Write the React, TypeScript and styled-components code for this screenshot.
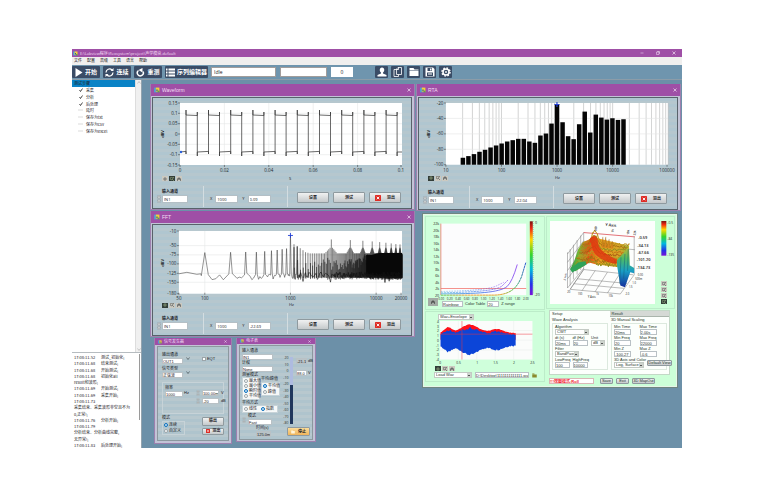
import React from "react";
import styled, { createGlobalStyle, css } from "styled-components";

const Global = createGlobalStyle`
  * { box-sizing: border-box; }
  html, body { margin: 0; background: #fff; }
  body { font: 5px/1 "Open Sans", "Noto Sans", "Noto Sans CJK SC", sans-serif; color: #1b2126; }
  button, input, select { font: inherit; color: inherit; margin: 0; padding: 0; border: 0; border-radius: 0; background: none; min-width: 0; }
  svg { display: block; flex-shrink: 0; }
  svg text { font-family: "Open Sans", "Noto Sans", "Noto Sans CJK SC", sans-serif; }
`;

/* ---------- application shell ---------- */

const Page = styled.main`
  min-height: 100vh;
  padding: 49px 75px 51px 72px;
  display: flex;
`;
const Shell = styled.div`
  flex: 1;
  min-width: 0;
  display: flex;
  flex-direction: column;
  background: #6c90a8;
`;
const TitleBar = styled.header`
  height: 8px;
  display: flex;
  align-items: center;
  gap: 2px;
  padding: 0 6px 0 1px;
  color: #f3dff5;
  background: #9f4fa6;
  white-space: nowrap;
`;
const Caption = styled.h1`
  flex: 1;
  margin: 0;
  font: 400 4px/7px "Open Sans", "Noto Sans CJK SC", sans-serif;
`;
const WinButtons = styled.div`
  display: flex;
  gap: 11px;
`;
const WinButton = styled.button`
  width: 5px;
  height: 6px;
  color: #f7e9f8;
  display: grid;
  place-items: center;
`;
const MenuBar = styled.nav`
  height: 8px;
  display: flex;
  align-items: center;
  gap: 5px;
  padding-left: 2px;
  background: #f0efee;
  color: #111;
  font-size: 4px;
`;
const ToolBar = styled.div`
  height: 15px;
  display: flex;
  align-items: center;
  border-bottom: 1px solid #8c9ca8;
  background: #6f95ae;
`;
const ToolButton = styled.button<{ $w: number }>`
  width: ${(p) => p.$w}px;
  height: 12px;
  margin-right: 3px;
  display: flex;
  align-items: center;
  justify-content: center;
  gap: 2px;
  border-radius: 1px;
  background: #3a4c66;
  color: #fff;
  font-size: 6px;
  font-weight: 700;
  white-space: nowrap;
`;
const StatusField = styled.input<{ $w: number; $center?: boolean; $gap?: number }>`
  width: ${(p) => p.$w}px;
  height: 10px;
  margin-right: ${(p) => p.$gap ?? 4}px;
  padding: 0 2px;
  background: #fff;
  border: 1px solid ${(p) => (p.$center ? "#fff" : "#a29d9b")};
  text-align: ${(p) => (p.$center ? "center" : "left")};
`;
const IconButton = styled.button`
  width: 13px;
  height: 12px;
  margin-right: 3px;
  border-radius: 1px;
  display: grid;
  place-items: center;
  background: #3a4c66;
  color: #fff;
`;
const Work = styled.div`
  flex: 1;
  display: flex;
  min-height: 0;
`;
const Side = styled.aside`
  width: 70px;
  display: flex;
  flex-direction: column;
  gap: 1px;
  background: #b6bcc0;
  border-right: 1px solid #93a3ae;
  font: 4px/1 "Noto Sans CJK SC", sans-serif;
`;
const SidePane = styled.div<{ $grow?: boolean }>`
  display: flex;
  background: #fff;
  ${(p) => (p.$grow ? css`flex: 1;` : css`height: 95px;`)}
`;
const Tree = styled.ul`
  flex: 1;
  height: 54px;
  margin: 0;
  padding: 0;
  list-style: none;
  display: grid;
  grid-auto-rows: 1fr;
`;
const TreeItem = styled.li<{ $active?: boolean }>`
  display: flex;
  align-items: center;
  white-space: nowrap;
  gap: 2px;
  padding-left: ${(p) => (p.$active ? 2 : 6)}px;
  background: ${(p) => (p.$active ? "#0a83c6" : "#fff")};
`;
const TreeMark = styled.span`
  width: 6px;
  height: 5px;
  display: grid;
  place-items: center;
`;
const ScrollBar = styled.div<{ $slim?: boolean }>`
  width: ${(p) => (p.$slim ? 3 : 6)}px;
  display: flex;
  flex-direction: column;
  justify-content: space-between;
  align-items: center;
  padding: 1px 0;
  background: ${(p) => (p.$slim ? "#fff" : "#f0f0f0")};
  border-left: ${(p) => (p.$slim ? 0 : 1)}px solid #ddd;
  color: #999;
`;
const Thumb = styled.span`
  width: 1px;
  height: 66px;
  background: #9a9a9a;
`;
const Log = styled.ol`
  flex: 1;
  margin: 0;
  padding: 1px 0 0 2px;
  list-style: none;
  display: grid;
  grid-auto-rows: 1fr;
  align-items: center;
  overflow: hidden;
`;
const LogLine = styled.li`
  display: flex;
  gap: 6px;
  white-space: nowrap;
`;
const Desktop = styled.section`
  position: relative;
  flex: 1;
  overflow: hidden;
  background: #6c90a8;
`;

/* ---------- child windows ---------- */

const Win = styled.section<{ $x: number; $y: number; $w: number; $h: number }>`
  position: absolute;
  left: ${(p) => p.$x}px;
  top: ${(p) => p.$y}px;
  width: ${(p) => p.$w}px;
  height: ${(p) => p.$h}px;
  display: flex;
  flex-direction: column;
  background: #c2c3d6;
  border: 1px solid #9d80ae;
  border-top: 0;
`;
const WinTitle = styled.header<{ $small?: boolean }>`
  height: ${(p) => (p.$small ? 7 : 12)}px;
  padding: 0 3px;
  display: flex;
  align-items: center;
  gap: 2px;
  background: #9f4fa6;
  color: #f3dff5;
  font-family: "Liberation Sans", "Noto Sans CJK SC", sans-serif;
  font-size: ${(p) => (p.$small ? 4 : 5)}px;
`;
const WinName = styled.h2`
  flex: 1;
  margin: 0;
  font: inherit;
`;
const WinBody = styled.div`
  flex: 1;
  margin: 1px 2px 0 1px;
  display: flex;
  flex-direction: column;
  border: 1px solid #58626a;
  background: repeating-linear-gradient(#b0c6d0 0 3px, #b6c7ce 3px 6px);
`;
const AxisRow = styled.div`
  height: 9px;
  display: flex;
  align-items: center;
  padding: 0 0 0 9px;
`;
const Tools = styled.div`
  display: flex;
  gap: 1px;
`;
const MiniTool = styled.button<{ $dark?: boolean }>`
  width: 6px;
  height: 5px;
  display: grid;
  place-items: center;
  background: ${(p) => (p.$dark ? "#333d38" : "#cbc9c0")};
  color: ${(p) => (p.$dark ? "#b7cf9a" : "#30363a")};
`;
const Unit = styled.span`
  flex: 1;
  padding-left: 107px;
  font-size: 4px;
`;
const Controls = styled.div`
  flex: 1;
  display: flex;
  align-items: flex-end;
  padding: 0 10px 5px 4px;
`;
const Channel = styled.label`
  width: 32px;
  display: grid;
  grid-template-columns: 4px 26px;
  column-gap: 1px;
  row-gap: 1px;
  & > :first-child { grid-column: 2; font-size: 4px; line-height: 5px; font-weight: 600; }
`;
const Field = styled.input<{ $w: number }>`
  width: ${(p) => p.$w}px;
  height: 8px;
  padding: 0 1px;
  background: #fff;
  border: 1px solid #b4bfc5;
  font-size: 4px;
`;
const Divider = styled.span<{ $l: number; $r: number }>`
  align-self: stretch;
  width: 1px;
  margin: 3px ${(p) => p.$r}px -4px ${(p) => p.$l}px;
  background: #d3dde1;
`;
const Reading = styled.label`
  display: flex;
  align-items: center;
  gap: 3px;
  margin-right: 4px;
  font-size: 4px;
`;
const Push = styled.button<{ $w?: number; $h?: number; $tone?: string; $gap?: number }>`
  width: ${(p) => p.$w ?? 32}px;
  height: ${(p) => p.$h ?? 11}px;
  display: flex;
  align-items: center;
  justify-content: center;
  gap: ${(p) => p.$gap ?? 6}px;
  border: 1px solid #8f9a9f;
  border-radius: 1px;
  background: ${(p) => p.$tone ?? "linear-gradient(#f0f1f1, #c5c9cb)"};
  font-size: 4px;
  font-weight: 600;
  white-space: nowrap;
`;
const Actions = styled.div`
  flex: 1;
  display: flex;
  justify-content: flex-end;
  gap: 4px;
`;

/* ---------- icons ---------- */

const LabIcon = ({ s = 6 }: { s?: number }) => (
  <svg width={s} height={s} viewBox="0 0 10 10">
    <path d="M0 1h6v8H0z" fill="#4f9ad6" />
    <path d="M3 1h6v7H3z" fill="#f5cf3a" />
    <path d="M4 4h2v3H4z" fill="#2b5b9a" />
    <path d="M6 6h3v3H6z" fill="#5fa34e" />
  </svg>
);
const Cross = ({ s = 4 }: { s?: number }) => (
  <svg width={s} height={s} viewBox="0 0 8 8">
    <path d="M1 1l6 6M7 1L1 7" stroke="currentColor" strokeWidth="1.3" />
  </svg>
);
const RedStop = ({ s = 6 }: { s?: number }) => (
  <svg width={s} height={s} viewBox="0 0 12 12">
    <rect width="12" height="12" rx="1" fill="#de2d26" />
    <path d="M3.500 3.500l5 5M8.500 3.500l-5 5" stroke="#fff" strokeWidth="1.800" />
  </svg>
);
const Spinner = ({ h = 8 }: { h?: number }) => (
  <svg width="4" height={h} viewBox="0 0 8 16">
    <rect x=".5" y=".5" width="7" height="7" rx="3" fill="#d5dbde" stroke="#87939a" />
    <rect x=".5" y="8.500" width="7" height="7" rx="3" fill="#d5dbde" stroke="#87939a" />
    <path d="M2 5l2-2 2 2M2 11l2 2 2-2" fill="none" stroke="#555" />
  </svg>
);
const PlayIcon = () => (
  <svg width="8" height="9" viewBox="0 0 16 18"><path d="M1 0l14 9-14 9z" fill="#fff" /></svg>
);
const CycleIcon = () => (
  <svg width="9" height="9" viewBox="0 0 18 18" fill="none" stroke="#fff" strokeWidth="2.400">
    <path d="M2 9a7 7 0 0 1 12-5M16 9a7 7 0 0 1-12 5" />
    <path d="M11 6h6V0zM7 12H1v6z" fill="#fff" stroke="none" />
  </svg>
);
const RedoIcon = () => (
  <svg width="9" height="9" viewBox="0 0 18 18" fill="none" stroke="#fff" strokeWidth="3">
    <path d="M5 5a6 6 0 1 0 9 2" />
    <path d="M5 4l8-4v9z" fill="#fff" stroke="none" />
  </svg>
);
const ListIcon = () => (
  <svg width="9" height="9" viewBox="0 0 18 18" fill="#fff">
    <path d="M0 1h3v4H0zM0 7h3v4H0zM0 13h3v4H0zM5 1h13v4H5zM5 7h13v4H5zM5 13h13v4H5z" />
  </svg>
);
const UserIcon = () => (
  <svg width="10" height="10" viewBox="0 0 20 20" fill="#fff">
    <path d="M10 1c3 0 4.500 2 4.500 5 0 2-1 4-2.500 5v2l7 3v3H1v-3l7-3v-2C6.500 10 5.500 8 5.500 6c0-3 1.500-5 4.500-5z" />
  </svg>
);
const CopyIcon = () => (
  <svg width="10" height="10" viewBox="0 0 20 20" fill="#3a4c66" stroke="#fff" strokeWidth="1.600">
    <path d="M2 5h9v14H2z" />
    <path d="M7 4l3-3h7v14H7zM7 5h4V1" />
  </svg>
);
const FolderIcon = ({ fill = "#fff", s = 10 }: { fill?: string; s?: number }) => (
  <svg width={s} height={s} viewBox="0 0 20 20" fill={fill}>
    <path d="M1 2h8l2 3h8v2H1zM1 8h18v10H1z" />
  </svg>
);
const SaveIcon = () => (
  <svg width="10" height="10" viewBox="0 0 20 20">
    <path d="M1 1h15l3 3v15H1z" fill="#fff" />
    <path d="M5 2h9v6H5zM4 11h12v7H4z" fill="#3a4c66" />
    <path d="M10 3h3v4h-3zM6 13h8v1H6zM6 15h8v1H6z" fill="#fff" />
  </svg>
);
const GearIcon = () => (
  <svg width="10" height="10" viewBox="0 0 20 20" fill="none" stroke="#fff">
    <circle cx="10" cy="10" r="6" strokeWidth="3" />
    <circle cx="10" cy="10" r="8" strokeWidth="3" strokeDasharray="3.140 3.140" />
    <circle cx="10" cy="10" r="1.500" fill="#fff" />
  </svg>
);
const Tick = () => (
  <svg width="4" height="4" viewBox="0 0 8 8"><path d="M1 4l2 3 4-6" fill="none" stroke="#111" strokeWidth="1.500" /></svg>
);
const Dash = () => (
  <svg width="6" height="4" viewBox="0 0 6 4"><path d="M0 2h5" stroke="#ccc" strokeWidth=".7" /></svg>
);
const Chevron = ({ up = false }: { up?: boolean }) => (
  <svg width="4" height="3" viewBox="0 0 8 6"><path d={up ? "M1 5l3-4 3 4" : "M1 1l3 4 3-4"} fill="none" stroke="currentColor" /></svg>
);
const CrossMark = () => (
  <svg width="4" height="4" viewBox="0 0 8 8"><path d="M4 0v8M0 4h8" stroke="currentColor" /></svg>
);
const ZoomMark = () => (
  <svg width="4" height="4" viewBox="0 0 8 8" fill="none" stroke="currentColor"><circle cx="3" cy="3" r="2.500" /><path d="M5 5l3 3M6 1h2" /></svg>
);
const HandMark = () => (
  <svg width="4" height="4" viewBox="0 0 8 8" fill="none" stroke="currentColor"><path d="M1 8V3M3 5V1M5 5V1M7 8V3M1 4h6" /></svg>
);

const GraphTools = ({ lit = 0 }: { lit?: number }) => (
  <Tools>
    <MiniTool aria-label="Cursor" $dark={lit === 0}><CrossMark /></MiniTool>
    <MiniTool aria-label="Zoom" $dark={lit === 1}><ZoomMark /></MiniTool>
    <MiniTool aria-label="Pan"><HandMark /></MiniTool>
  </Tools>
);

/* ---------- plots ---------- */

type TickMark = [number, string];

const YAxis = ({ x, ticks }: { x: number; ticks: TickMark[] }) => (
  <g fontSize="4.500" textAnchor="end" fill="#20282d">
    {ticks.map(([y, t]) => (
      <g key={t}>
        <path d={`M${x - 2} ${y}h2`} stroke="#444" strokeWidth=".6" />
        <text x={x - 2.5} y={y + 1.6}>{t}</text>
      </g>
    ))}
  </g>
);
const XAxis = ({ y, ticks }: { y: number; ticks: TickMark[] }) => (
  <g fontSize="4.500" textAnchor="middle" fill="#20282d">
    {ticks.map(([x, t]) => (
      <g key={t}>
        <path d={`M${x} ${y}v2`} stroke="#444" strokeWidth=".6" />
        <text x={x} y={y + 7}>{t}</text>
      </g>
    ))}
  </g>
);
const YName = ({ x, y }: { x: number; y: number }) => (
  <text fontSize="4" fontWeight="600" transform={`translate(${x} ${y}) rotate(-90)`} textAnchor="middle">dBV</text>
);

const noise = (i: number) => {
  const v = Math.sin(i * 12.9898) * 43758.5453;
  return v - Math.floor(v);
};

const WavePlot = () => {
  let d = "M27 54L33 53.400";
  for (let k = 0; k < 10; k++) {
    const r = 33.3 + k * 22.2;
    d += `V56V12V17L${r + 11} 17.500V14V58V54`;
    d += k < 9 ? `L${r + 22.2} 53.400` : "H249";
  }
  return (
    <svg viewBox="0 0 258 76" width="100%">
      <rect x="27" y="5" width="222" height="62" fill="#fff" />
      <path d="M71.400 5v62M115.800 5v62M160.200 5v62M204.600 5v62M27 15.300h222M27 25.700h222M27 36h222M27 46.300h222M27 56.700h222" stroke="#e4e6e6" strokeWidth=".6" />
      <path d={d} fill="none" stroke="#383838" strokeWidth=".75" />
      <circle cx="28" cy="54" r="1.200" fill="#2b60db" />
      <YAxis x={27} ticks={[[5, "0.15"], [15.3, "0.1"], [25.7, "0.05"], [36, "0"], [46.3, "-0.05"], [56.7, "-0.1"], [67, "-0.15"]]} />
      <XAxis y={67} ticks={[[27, "0"], [71.4, "0.02"], [115.8, "0.04"], [160.2, "0.06"], [204.6, "0.08"], [248, "0.1"]]} />
      <YName x={11} y={36} />
    </svg>
  );
};

const BAND_LEVELS = [233, 228, 222, 215, 209, 202, 196, 190, 184, 180, 176, 176, 184, 188, 166, 160, 130, 72, 126, 168, 177, 132, 94, 157, 103, 112, 118, 114, 119, 117];

const BandPlot = () => {
  let minor = "";
  for (let dec = 0; dec < 4; dec++)
    for (let m = 2; m <= 10; m++) minor += `M${27 + 55.8 * (dec + Math.log10(m))} 5v62`;
  return (
    <svg viewBox="0 0 259 76" width="100%">
      <rect x="27" y="5" width="223" height="62" fill="#fff" />
      <path d={minor} stroke="#bfc1c1" strokeWidth=".7" />
      <path d="M27 20.500h223M27 36h223M27 51.500h223" stroke="#e4e6e6" strokeWidth=".6" />
      {BAND_LEVELS.map((v, i) => {
        const top = (v - 68) / 3 + 5;
        return <rect key={i} x={41.8 + i * 5.56} y={top} width="4.500" height={67 - top} fill="#050505" />;
      })}
      <path d="M138.500 4v5M136 6.500h5" stroke="#2340d8" strokeWidth="1.100" />
      <YAxis x={27} ticks={[[5, "-20"], [20.5, "-40"], [36, "-60"], [51.5, "-80"], [67, "-100"]]} />
      <XAxis y={67} ticks={[[27, "10"], [82.8, "100"], [138.6, "1000"], [194.4, "10000"], [249, "100000"]]} />
      <YName x={11} y={36} />
    </svg>
  );
};

const fx = (hz: number) => 52 + 86 * Math.log10(hz / 100);
const SpectrumPlot = () => {
  let low = "M26 49L34 47.500L44 49.500L48 49";
  for (let n = 1; n <= 12; n++) {
    const x = fx(n * 100);
    const peak = n === 10 ? 10 : n < 4 ? 28 - n * 0.3 : 30 - n * 0.7;
    const half = Math.max(0.8, 3.5 / n);
    low += `L${x - half} ${49 + noise(n) * 2}L${x} ${peak}L${x + half} ${48 + noise(n + 40) * 2}`;
    const gap = fx((n + 1) * 100) - x - half * 2;
    for (let j = 1; j < 5; j++) low += `L${x + half + (gap * j) / 5} ${49 + noise(n * 9 + j) * 6}`;
  }
  let peaks = "";
  let dense = "";
  for (let n = 11; n <= 200; n++) {
    const x = fx(n * 100);
    const dist = (n + 10) % 20;
    const d = Math.min(dist, 20 - dist);
    const top = 28.5 - (d === 0 ? 15 - Math.min(6, n / 30) : Math.max(0, 7 - d * 1.4)) - (n < 17 ? (17 - n) * 0.6 : 0);
    peaks += `M${x} ${top}V53`;
    dense += `M${x + 0.3} ${n < 70 ? 33 + noise(n) * 12 : 29 + noise(n) * (n < 100 ? 10 : 1)}V${52 + noise(n + 3) * 3}`;
  }
  let floor = "M147 50";
  for (let x = 147; x < 250; x += x < 180 ? 1.2 : 0.5) floor += `L${x} ${47 + noise(x * 3) * 6 + (noise(x * 7) > 0.93 ? 5 : 0)}`;
  return (
    <svg viewBox="0 0 259 76" width="100%">
      <rect x="26" y="6" width="224" height="63" fill="#fff" />
      <path d="M52 6v63M138 6v63M224 6v63M26 20.700h224M26 30h224M26 39h224M26 48.500h224M26 57.500h224" stroke="#e4e6e6" strokeWidth=".6" />
      <path d={low} fill="none" stroke="#4c4c4c" strokeWidth=".6" />
      <path d={peaks} stroke="#333" strokeWidth=".6" />
      <path d={dense} stroke="#111" strokeWidth=".6" />
      <path d="M214 30h5l8-2h23v23h-26l-10-2z" fill="#080808" />
      <path d={floor} fill="none" stroke="#111" strokeWidth=".6" />
      <path d="M138 8v5M135.500 10.500h5" stroke="#2340d8" strokeWidth=".9" />
      <YAxis x={26} ticks={[[6, "-10"], [20.7, "-50"], [30, "-75"], [39, "-100"], [48.5, "-125"], [57.5, "-150"], [69, "-180"]]} />
      <XAxis y={68} ticks={[[26, "50"], [52, "100"], [138, "1000"], [224, "10000"], [249, "20000"]]} />
      <YName x={11} y={38} />
    </svg>
  );
};

interface GraphProps { name: string; x: number; y: number; h: number; unit: string; value: string; lit?: number; children: React.ReactNode }
const GraphWindow = ({ name, x, y, h, unit, value, lit, children }: GraphProps) => (
  <Win $x={x} $y={y} $w={265} $h={h}>
    <WinTitle>
      <LabIcon />
      <WinName>{name}</WinName>
      <WinButton aria-label={`Close ${name}`}><Cross /></WinButton>
    </WinTitle>
    <WinBody>
      {children}
      <AxisRow><GraphTools lit={lit} /><Unit>{unit}</Unit></AxisRow>
      <Controls>
        <Channel><span>输入通道</span><Spinner /><Field $w={26} defaultValue="IN1" /></Channel>
        <Divider $l={14} $r={6} />
        <Reading>X<Field $w={23} defaultValue="1000" /></Reading>
        <Reading>Y<Field $w={23} defaultValue={value} /></Reading>
        <Divider $l={12} $r={0} />
        <Actions>
          <Push>设置</Push>
          <Push>测试</Push>
          <Push><RedStop />退出</Push>
        </Actions>
      </Controls>
    </WinBody>
  </Win>
);

/* ---------- generator and voltmeter ---------- */

const FormBody = styled.div<{ $pad?: number }>`
  flex: 1;
  margin: 1px 2px 2px;
  padding: ${(p) => p.$pad ?? 4}px;
  border: 1px solid #8c989e;
  display: flex;
  flex-direction: column;
  font: 4px/1 "Liberation Sans", "Noto Sans CJK SC", sans-serif;
  background: repeating-linear-gradient(#afc4cd 0 3px, #b8c8ce 3px 6px);
`;
const Line = styled.div<{ $gap?: number; $mt?: number }>`
  display: flex;
  align-items: center;
  gap: ${(p) => p.$gap ?? 2}px;
  margin-top: ${(p) => p.$mt ?? 0}px;
`;
const Stack = styled.label<{ $mt?: number }>`
  display: flex;
  flex-direction: column;
  gap: 1px;
  margin-top: ${(p) => p.$mt ?? 0}px;
`;
const Tiny = styled.input<{ $w: number; $dim?: boolean }>`
  width: ${(p) => p.$w}px;
  height: 6px;
  padding: 0;
  font-size: 4px;
  background: ${(p) => (p.$dim ? "#b9c3c7" : "#fff")};
  border: 1px solid #b9c1c5;
`;
const Group = styled.fieldset<{ $white?: boolean; $w?: number; $tight?: boolean }>`
  min-width: 0;
  margin: 0;
  padding: 1px;
  width: ${(p) => (p.$w ? `${p.$w}px` : "auto")};
  border: 1px solid #c7d3d8;
  background: ${(p) => (p.$white ? "#f6f8f8" : "transparent")};
  display: flex;
  flex-direction: column;
  gap: ${(p) => (p.$tight ? 1 : 2)}px;
`;
const SignalGroup = styled(Group)`
  margin-top: 4px;
  padding: 3px 2px;
  min-height: 32px;
  flex-direction: row;
  align-items: flex-start;
  gap: 1px;
`;
const Levels = styled.div`
  display: flex;
  flex-direction: column;
  gap: 2px;
  padding: 4px 0 0 6px;
`;
const Choice = styled.label`
  display: flex;
  align-items: center;
  gap: 1px;
  white-space: nowrap;
`;
const Dot = styled.input`
  appearance: none;
  flex-shrink: 0;
  width: 4px;
  height: 4px;
  border: 1px solid #9ba4a9;
  border-radius: 50%;
  background: #fff;
  &:checked { border-color: #0b70bd; background: #cfe6f7; }
`;
const TickBox = styled(Dot)`
  border-radius: 0;
`;
const Columns = styled.div`
  flex: 1;
  min-height: 0;
  display: flex;
  gap: 2px;
`;
const Column = styled.div<{ $w?: number; $mt?: number; $gap?: number }>`
  width: ${(p) => (p.$w ? `${p.$w}px` : "auto")};
  flex-shrink: 0;
  margin-top: ${(p) => p.$mt ?? 0}px;
  display: flex;
  flex-direction: column;
  white-space: nowrap;
  gap: ${(p) => p.$gap ?? 0}px;
`;
const Spacer = styled.span`
  flex: 1;
`;

const Generator = () => (
  <Win $x={12} $y={258} $w={78} $h={106}>
    <WinTitle $small><LabIcon s={4} /><WinName>信号发生器</WinName><WinButton aria-label="Close generator"><Cross s={3} /></WinButton></WinTitle>
    <FormBody>
      <Line $gap={3} $mt={2}>
        <Stack>输出通道<Tiny $w={21} defaultValue="OUT1" /></Stack>
        <Chevron />
        <Spacer />
        <Choice><TickBox type="checkbox" />EQT</Choice>
        <Spacer />
      </Line>
      <Line $gap={3} $mt={3}><Stack>信号类型<Tiny $w={21} defaultValue="正弦波" /></Stack><Chevron /></Line>
      <SignalGroup>
        <Stack>频率<Tiny $w={18} defaultValue="1000" /></Stack>
        <Stack $mt={5}>Hz</Stack>
        <Levels>
          <Line><Spinner h={6} /><Tiny $w={17} aria-label="Level V" defaultValue="100.00m" />V</Line>
          <Line><Spinner h={6} /><Tiny $w={17} aria-label="Level dB" defaultValue="-20" />dB</Line>
        </Levels>
      </SignalGroup>
      <Line $mt={2}>
        <Column $w={23} $gap={1}>
          <span>模式</span>
          <Group>
            <Choice><Dot type="radio" name="gen" defaultChecked />连续</Choice>
            <Choice><Dot type="radio" name="gen" />自定义</Choice>
          </Group>
        </Column>
        <Spacer />
        <Column $gap={2}>
          <Push $w={22} $h={9}>输出</Push>
          <Push $w={22} $h={7} $gap={3}><RedStop s={4} />退出</Push>
        </Column>
      </Line>
    </FormBody>
  </Win>
);

const METER = ["20", "10", "0", "-10", "-20", "-30", "-40", "-50", "-60", "-70", "-80"];
const Voltmeter = () => (
  <Win $x={94} $y={258} $w={80} $h={104}>
    <WinTitle $small><LabIcon s={4} /><WinName>电子表</WinName><WinButton aria-label="Close meter"><Cross s={3} /></WinButton></WinTitle>
    <FormBody $pad={2}>
      <Columns>
        <Column $w={38}>
          <Stack $mt={1}>输入通道<Tiny $w={31} defaultValue="IN1" /></Stack>
          <Stack $mt={1}>计权<Tiny $w={31} defaultValue="None" /></Stack>
          <Line $gap={1} $mt={1}>
            <Column $w={18}>
              <span>测量模式</span>
              <Group $white $tight $w={18}>
                <Choice><Dot type="radio" name="m" />最大值</Choice>
                <Choice><Dot type="radio" name="m" />最小值</Choice>
                <Choice><Dot type="radio" name="m" defaultChecked />瞬时值</Choice>
                <Choice><Dot type="radio" name="m" />平均值</Choice>
              </Group>
            </Column>
            <Column $w={19} $gap={1}>
              <span>平均/峰值</span>
              <Group $white $w={19}>
                <Choice><Dot type="radio" name="p" defaultChecked />平均值</Choice>
                <Choice><Dot type="radio" name="p" />峰值</Choice>
              </Group>
            </Column>
          </Line>
          <Line $mt={1}>平均方式</Line>
          <Group $white $w={36}>
            <Line $gap={4}>
              <Choice><Dot type="radio" name="a" />线性</Choice>
              <Choice><Dot type="radio" name="a" defaultChecked />指数</Choice>
            </Line>
          </Group>
          <Line $mt={1}><Spinner h={6} /><Stack>模式<Tiny $w={24} defaultValue="Fast" /></Stack></Line>
        </Column>
        <Column $w={12}>
          <svg viewBox="0 0 12 78" width="12">
            <g fontSize="3.500" textAnchor="end" fill="#333">
              {METER.map((m, i) => <text key={m} x="6.500" y={11 + i * 6.5}>{m}</text>)}
            </g>
            <rect x="8" y="9" width="3" height="67" fill="#aebbe0" />
            <rect x="8" y="37" width="3" height="39" fill="#20375d" />
          </svg>
        </Column>
        <Column>
          <Line $mt={10} $gap={1}><Tiny $w={11} $dim aria-label="dBV" defaultValue="-21.1" />dB</Line>
          <Line $mt={6} $gap={1}><Tiny $w={11} aria-label="V" defaultValue="88.0" />V</Line>
        </Column>
      </Columns>
      <Line>
        <Spacer />
        <Stack>时间(s)<Tiny $w={15} $dim defaultValue="125.0m" /></Stack>
        <Spacer />
        <Push $w={23} $h={9} $gap={3} $tone="linear-gradient(#fbdc9a, #efb45b)"><FolderIcon s={4} fill="#fff4da" />停止</Push>
      </Line>
    </FormBody>
  </Win>
);

/* ---------- wave analysis ---------- */

const Analysis = styled.section`
  position: absolute;
  left: 280px;
  top: 133px;
  width: 256px;
  height: 175px;
  padding: 2px;
  display: grid;
  grid-template-columns: 120px 1fr;
  grid-template-rows: 100%;
  gap: 1px;
  border: 1px solid #6f8580;
  box-shadow: inset 0 0 0 1px #e6f5e8;
  background: #ccffd8;
  font: 4px/1 "Liberation Sans", "Noto Sans CJK SC", sans-serif;
  color: #26352a;
  & button { font-weight: 400; }
`;
const Half = styled.div`
  min-width: 0;
  min-height: 0;
  display: flex;
  flex-direction: column;
  gap: 1px;
`;
const Panel = styled.div<{ $h: number }>`
  height: ${(p) => p.$h}px;
  padding: 2px;
  border: 1px solid #bcecc9;
  background: #cfffdb;
`;
const Drop = styled.select<{ $w: number }>`
  appearance: none;
  width: ${(p) => p.$w}px;
  height: 6px;
  padding: 0 4px 0 1px;
  border: 1px solid #c3cac4;
  background: linear-gradient(#555, #555) right 1px center / 2px 1px no-repeat, linear-gradient(90deg, #fff, #fff) left / calc(100% - 4px) 100% no-repeat, #cdd3cd;
  font-size: 4px;
`;
const Tabs = styled.div`
  margin: 0 5px 0 3px;
  flex: 1;
  min-height: 0;
  border: 1px solid #c3d8c7;
  background: #fcfffc;
`;
const TabList = styled.div`
  display: grid;
  grid-template-columns: 1fr 1fr;
`;
const Tab = styled.button<{ $on?: boolean }>`
  height: 6px;
  padding-left: 2px;
  text-align: left;
  border-bottom: 1px solid ${(p) => (p.$on ? "#fcfffc" : "#aab5ac")};
  background: ${(p) => (p.$on ? "#fcfffc" : "#d5d9d5")};
`;
const TabBody = styled.div`
  display: grid;
  grid-template-columns: 56px 1fr;
  gap: 1px 3px;
  padding: 1px 2px;
`;
const Section = styled.fieldset`
  margin: 0;
  padding: 1px 2px;
  min-width: 0;
  border: 1px solid #dce9de;
  display: grid;
  grid-template-columns: repeat(3, auto);
  gap: 1px 2px;
  align-content: start;
  justify-content: start;
  & > .wide { grid-column: 1 / -1; }
`;
const Cell = styled.label`
  display: flex;
  flex-direction: column;
  white-space: nowrap;
`;
const Footer = styled.div`
  height: 9px;
  display: flex;
  align-items: center;
  gap: 3px;
  padding: 0 20px 0 3px;
`;
const ViewRow = styled.div`
  height: 93px;
  display: flex;
  gap: 6px;
  padding: 4px 0 4px 3px;
  border: 1px solid #bcecc9;
`;
const ViewBox = styled.div`
  width: 105px;
  flex-shrink: 0;
  background: #fdfefd;
`;
const ViewSide = styled.div`
  flex: 1;
  display: flex;
  flex-direction: column;
  justify-content: space-between;
`;
const ToolStack = styled.div`
  display: flex;
  flex-direction: column;
  gap: 1px;
`;
const Inset = styled.span`
  width: 8px;
`;
const Gutter = styled.span`
  width: 3px;
`;
const Alert = styled.input`
  width: 45px;
  height: 6px;
  background: #fff;
  border: 1px solid #d9b8b8;
  color: #f2202a;
  font-weight: 700;
`;
const SmallTools = styled.button`
  width: 10px;
  height: 8px;
  margin: -4px 2px 0 0;
  display: grid;
  place-items: center;
  background: #a3aaa5;
  color: #222;
`;

const ColorStops = () => (
  <>
    <stop offset="0" stopColor="#7a1010" /><stop offset=".1" stopColor="#f02a12" /><stop offset=".25" stopColor="#ffd800" />
    <stop offset=".45" stopColor="#35d52c" /><stop offset=".65" stopColor="#00b9dd" /><stop offset=".85" stopColor="#2432e8" /><stop offset="1" stopColor="#7a14d8" />
  </>
);

const DecayPlot = () => (
  <svg viewBox="0 0 346 247" width="100%">
    <defs>
      <linearGradient id="bar" x1="0" y1="0" x2="0" y2="1"><ColorStops /></linearGradient>
      <linearGradient id="curve" gradientUnits="userSpaceOnUse" x1="40" y1="0" x2="300" y2="0">
        <stop offset="0" stopColor="#54c94d" /><stop offset=".3" stopColor="#f2a03b" /><stop offset=".7" stopColor="#e9a02f" />
        <stop offset=".85" stopColor="#48c84a" /><stop offset="1" stopColor="#2450dc" />
      </linearGradient>
      <linearGradient id="curve2" x1="0" y1="0" x2="1" y2="0">
        <stop offset="0" stopColor="#5bb6dd" /><stop offset=".5" stopColor="#3476e4" /><stop offset="1" stopColor="#863cf0" />
      </linearGradient>
    </defs>
    <rect x="39" y="14" width="259" height="217" fill="#fcfcfd" />
    <path d="M39 14v217M39 211h259" stroke="#f05a52" strokeWidth="2" fill="none" />
    <g fill="none">
      <path d="M39 231H200C250 230 270 210 284 175L297 132" stroke="url(#curve)" strokeWidth="3" strokeDasharray="8 1" />
      <path d="M39 227C150 227 215 224 240 205Q256 190 271 138" stroke="url(#curve2)" strokeWidth="2.500" />
      <path d="M39 224C140 222 205 218 224 204L244 184" stroke="url(#curve2)" strokeWidth="2" strokeDasharray="7 2" />
      <path d="M39 220C130 218 180 214 206 204L230 192" stroke="url(#curve2)" strokeWidth="1.500" strokeDasharray="5 3" />
    </g>
    <g fontSize="11" fill="#222">
      {["22k", "20k", "18k", "16k", "14k", "12k", "10k", "8k", "6k", "4k", "2k", "20"].map((t, i) => (
        <text key={t} x="34" y={19 + i * 19.7} textAnchor="end">{t}</text>
      ))}
      {["0.00", "0.20", "0.40", "0.60", "0.80", "1.00", "1.20", "1.40", "1.60", "1.80", "2.00"].map((t, i) => (
        <text key={t} x={40 + i * 25.7} y="246" textAnchor="middle" fontSize="9">{t}</text>
      ))}
      <text x="325" y="14">0</text><text x="323" y="233">-20</text>
    </g>
    <rect x="309" y="7" width="9" height="224" fill="url(#bar)" />
    <path d="M320 8v222" stroke="#333" strokeWidth="2" strokeDasharray="1 5" />
  </svg>
);

const EnvelopePlot = () => {
  const up: string[] = [];
  const red: string[] = [];
  const down: string[] = [];
  for (let i = 0; i <= 76; i++) {
    const x = 38 + i * 3;
    const t = i / 76;
    const bumps = 22 * Math.exp(-(((t - 0.1) / 0.07) ** 2)) + 33 * Math.exp(-(((t - 0.39) / 0.16) ** 2)) + 15 * Math.exp(-(((t - 0.75) / 0.12) ** 2));
    const n = noise(i + 5) * 5;
    red.push(`${x} ${39 - bumps * 0.8 + n * 0.4}`);
    up.push(`${x} ${42 - bumps * (0.45 + 0.3 * noise(i)) + n}`);
    down.push(`${x} ${80 + bumps * 0.85 - n}`);
  }
  const close = down.reverse().join("L");
  return (
    <svg viewBox="0 0 346 140" width="100%">
      <rect x="36" y="3" width="281" height="117" fill="#fbfcfb" />
      <path d="M92 3v117M148 3v117M204 3v117M260 3v117M36 32h281M36 61h281M36 91h281" stroke="#e1e5e2" />
      <path d={`M${red.join("L")}L266 60H38z`} fill="#ff1018" />
      <path d={`M${up.join("L")}L${close}z`} fill="#0c45d8" />
      <path d="M36 43h281M103 3v117" stroke="#ef3340" strokeWidth="1.500" />
      <g fontSize="10" fill="#222">
        {["4", "3", "2", "1", "0", "-1", "-2", "-3", "-4"].map((t, i) => (
          <text key={t} x="33" y={9 + i * 14.3} textAnchor="end">{t}</text>
        ))}
        {["0", "0.5", "1", "1.5", "2", "2.5"].map((t, i) => (
          <text key={t} x={37 + i * 56} y="134" textAnchor="middle">{t}</text>
        ))}
      </g>
    </svg>
  );
};

const SurfacePlot = () => {
  const ridges: React.ReactNode[] = [];
  const tints = ["#e3b321", "#c58a19", "#a7b52a", "#f08a1c", "#cf6f1a", "#d9c334"];
  for (let r = 0; r < 9; r++) {
    let d = "";
    for (let i = 0; i <= 50; i++) {
      const t = i / 50;
      const x = 124 - r * 3 + t * (140 - r * 1.5);
      const crest = 34 * Math.exp(-(((t - 0.25 - r * 0.015) / 0.1) ** 2)) * (1 - r / 11);
      const y = 118 + r * 8 + t * 9 - crest - noise(i * 3 + r * 17) * (r > 6 ? 12 : 8);
      d += `${i ? "L" : "M"}${x} ${y}`;
    }
    ridges.push(<path key={r} d={d} fill="none" stroke={tints[r % 6]} strokeWidth="3" />);
    ridges.push(<path key={`s${r}`} d={d} fill="none" stroke="#6e4a0b" strokeWidth="1" />);
  }
  return (
    <svg viewBox="23 50 318 256" width="100%">
      <defs>
        <linearGradient id="heat" x1="0" y1="0" x2="1" y2="0">
          <stop offset="0" stopColor="#2a9b4c" /><stop offset=".15" stopColor="#7ab532" /><stop offset=".32" stopColor="#e84814" />
          <stop offset=".5" stopColor="#e8a020" /><stop offset=".85" stopColor="#d2a528" /><stop offset="1" stopColor="#8fb43c" />
        </linearGradient>
        <linearGradient id="cliff" x1="0" y1="0" x2="0" y2="1">
          <stop offset="0" stopColor="#cfb62a" /><stop offset=".3" stopColor="#4fbb62" /><stop offset=".6" stopColor="#199fc5" /><stop offset="1" stopColor="#152d9c" />
        </linearGradient>
      </defs>
      <g stroke="#777" strokeWidth="1.500" fill="none">
        <path d="M125 85V197L84 257M76 145v108M84 135v110M94 122v105M105 108v104M116 94v104M76 150L125 85M76 175l49-65M76 200l49-65M76 225l49-62M76 253l49-60" />
        <path d="M84 257l152 14M95 240l152 14M106 225l150 14M125 197l150 16M125 197l-41 60M160 200l-40 61M197 205l-38 60M235 209l-38 59M278 213l-42 58M125 122l155 15M278 97v116" />
      </g>
      <path d="M125 85l155 13" stroke="#d42a35" strokeWidth="2" />
      <path d="M84 196l12-24 12-36 14-22 20-8 16-13 12 10 92 22 2 60-40 4-64-8-18-5-42 26-5-2z" fill="url(#heat)" />
      {ridges}
      <path d="M180 130l3-32 3 30 6-30 3 31 7-24 3 26 7-20 2 22" fill="#d8871c" stroke="#8a5a10" strokeWidth=".7" />
      <path d="M144 104c4-10 22-14 24 8 2 24 20 38 58 54l-2 14c-44-8-70-26-74-52-2-10-8-14-6-24z" fill="#e03410" opacity=".8" />
      <path d="M226 168l22-24 14-18 2 58 14 8v16l-12-3-16 46-14-6-10-60z" fill="url(#cliff)" />
      <path d="M84 196l24-20 22-4 4 10-44 24z" fill="#2fa35a" />
      <path d="M238 160l-4 80M250 150l-4 75M260 135l-2 66" stroke="#15607a" strokeWidth="1.500" />
      <g fontSize="12" fill="#111" fontWeight="600">
        <text x="190" y="65" transform="rotate(5 190 65)">Y Axis</text>
        <text x="290" y="105">-0.59</text><text x="287" y="129">-34.13</text><text x="288" y="150">-67.66</text>
        <text x="286" y="172">-101.20</text><text x="285" y="194">-134.73</text>
        <text transform="translate(164 82) rotate(-85)" fontSize="9">100</text><text transform="translate(215 85) rotate(-85)" fontSize="9">1k</text>
        <text transform="translate(262 92) rotate(-85)" fontSize="9">10k</text><text transform="translate(282 94) rotate(-85)" fontSize="9">22k</text>
      </g>
      <g fontSize="8" fill="#222">
        <text x="289" y="217">0.00</text><text x="281" y="229">500m</text><text x="272" y="240">1.0</text><text x="262" y="252">1.5</text><text x="252" y="273">2.0</text>
        <text x="75" y="268">20</text><text x="107" y="273">100</text><text x="162" y="274">1k</text><text x="200" y="279">10k</text>
        <text x="137" y="283" fontSize="9">Y Axis</text>
        <text transform="translate(70 230) rotate(-80)">Z Axis</text>
      </g>
    </svg>
  );
};

const AnalysisWindow = () => (
  <Analysis>
    <Half>
      <Panel $h={94}>
        <DecayPlot />
        <Line $mt={1}>
          <SmallTools aria-label="Graph tools"><HandMark /></SmallTools>
          <Tiny $w={21} aria-label="Palette" defaultValue="Rainbow" />
          <span>Color Table</span>
          <Tiny $w={12} aria-label="Z range" defaultValue="20" />
          <span>Z range</span>
        </Line>
      </Panel>
      <Panel $h={71}>
        <Line><Inset /><Drop $w={36} aria-label="View"><option>Wav+Envelope</option></Drop></Line>
        <EnvelopePlot />
        <Line $gap={4}>
          <Gutter />
          <GraphTools />
        </Line>
        <Line $gap={3} $mt={1}>
          <Gutter />
          <Drop $w={38} aria-label="Source"><option>Load Wav</option></Drop>
          <Tiny $w={54} aria-label="Path" defaultValue="D:\Desktop\1111111111111.wav" />
          <FolderIcon s={5} fill="#8a8a2c" />
        </Line>
      </Panel>
    </Half>
    <Half>
      <ViewRow>
        <ViewBox><SurfacePlot /></ViewBox>
        <ViewSide>
          <svg viewBox="0 0 45 108" width="15">
            <rect x="1" y="0" width="15" height="104" fill="url(#bar)" />
            <g fontSize="10" fill="#222"><text x="19" y="9">-0.5</text><text x="19" y="58">-84</text><text x="19" y="104">-135</text></g>
          </svg>
          <ToolStack>
            {["Rotate", "Pan view", "Zoom view", "Reset view"].map((n) => (
              <MiniTool key={n} aria-label={n} $dark={n === "Reset view"}><ZoomMark /></MiniTool>
            ))}
          </ToolStack>
        </ViewSide>
      </ViewRow>
      <Tabs>
        <TabList role="tablist"><Tab role="tab" $on>Setup</Tab><Tab role="tab">Result</Tab></TabList>
        <TabBody>
          <span>Wave Analysis</span><span>3D Manual Scaling</span>
          <Section>
            <Cell className="wide">Algorithm<Drop $w={34}><option>CWT</option></Drop></Cell>
            <Cell>dt (s)<Tiny $w={15} defaultValue="20ms" /></Cell>
            <Cell>df (Hz)<Tiny $w={15} defaultValue="20" /></Cell>
            <Cell>Unit<Drop $w={14}><option>dB</option></Drop></Cell>
            <Cell className="wide">Filter<Drop $w={24}><option>BandPass</option></Drop></Cell>
            <Cell>LowFreq<Tiny $w={15} defaultValue="100" /></Cell>
            <Cell>HighFreq<Tiny $w={15} defaultValue="10000" /></Cell>
          </Section>
          <Section>
            <Cell>Min Time<Tiny $w={17} defaultValue="20ms" /></Cell>
            <Cell>Max Time<Tiny $w={17} defaultValue="2.00s" /></Cell><span />
            <Cell>Min Freq<Tiny $w={17} defaultValue="20" /></Cell>
            <Cell>Max Freq<Tiny $w={17} defaultValue="22000" /></Cell><span />
            <Cell>Min Z<Tiny $w={17} defaultValue="-100.27" /></Cell>
            <Cell>Max Z<Tiny $w={17} defaultValue="-0.6" /></Cell><span />
            <Line className="wide" $gap={1}><Cell>3D Axis and Color<Drop $w={30}><option>Log, Surface</option></Drop></Cell><Push $w={25} $h={6}>Default View</Push></Line>
          </Section>
        </TabBody>
      </Tabs>
      <Footer>
        <Alert aria-label="Status" defaultValue="!!!视图模式:Roll" />
        <Spacer />
        <Push $w={13} $h={6}>Save</Push>
        <Push $w={13} $h={6}>Exit</Push>
        <Push $w={23} $h={6}>3D MapOut</Push>
      </Footer>
    </Half>
  </Analysis>
);

/* ---------- data and page ---------- */

const STEPS: [string, boolean][] = [["采集", true], ["分析", true], ["后处理", true], ["延时", false], ["保存为txt", false], ["保存为csv", false], ["保存为excel", false]];
const LOG: string[][] = [
  ["17:08:11.52", "测试_初始化;"], ["17:08:11.68", "结束测试;"], ["17:08:11.68", "开始测试;"], ["17:08:11.68", "初始化all"],
  ["result和波形;"], ["17:08:11.69", "开始测试;"], ["17:08:11.69", "采集开始;"], ["17:08:11.73"], ["采集结束、采集波形非空且不为"], ["0,正常!;"],
  ["17:08:11.76", "分析开始;"], ["17:08:11.79"], ["分析结束、分析曲线完整,"], ["无异常!;"], ["17:08:11.83", "后处理开始;"],
];

export default function App() {
  return (
    <>
      <Global />
      <Page>
        <Shell>
          <TitleBar>
            <LabIcon s={5} />
            <Caption>E:\Labview程序\flexsystem\project\声学模块-default</Caption>
            <WinButtons>
              <WinButton aria-label="Minimize"><svg width="4" height="4" viewBox="0 0 8 8"><path d="M1 4h6" stroke="currentColor" /></svg></WinButton>
              <WinButton aria-label="Maximize"><svg width="4" height="4" viewBox="0 0 8 8"><path d="M1 2h5v5H1zM3 2V1h4v4H6" fill="none" stroke="currentColor" /></svg></WinButton>
              <WinButton aria-label="Close"><Cross /></WinButton>
            </WinButtons>
          </TitleBar>
          <MenuBar>
            {["文件", "配置", "高级", "工具", "语言", "帮助"].map((m) => <button key={m}>{m}</button>)}
          </MenuBar>
          <ToolBar>
            <ToolButton $w={28}><PlayIcon />开始</ToolButton>
            <ToolButton $w={28}><CycleIcon />连续</ToolButton>
            <ToolButton $w={28}><RedoIcon />重测</ToolButton>
            <ToolButton $w={43}><ListIcon />序列编辑器</ToolButton>
            <StatusField $w={65} aria-label="Status" defaultValue="Idle" />
            <StatusField $w={47} aria-label="Serial number" />
            <StatusField $w={22} $center $gap={22} aria-label="Count" defaultValue="0" />
            <IconButton aria-label="User"><UserIcon /></IconButton>
            <IconButton aria-label="Copy"><CopyIcon /></IconButton>
            <IconButton aria-label="Open"><FolderIcon /></IconButton>
            <IconButton aria-label="Save"><SaveIcon /></IconButton>
            <IconButton aria-label="Settings"><GearIcon /></IconButton>
          </ToolBar>
          <Work>
            <Side>
              <SidePane $grow>
                <Tree>
                  <TreeItem $active>测试步骤</TreeItem>
                  {STEPS.map(([t, done]) => (
                    <TreeItem key={t}><TreeMark>{done ? <Tick /> : <Dash />}</TreeMark>{t}</TreeItem>
                  ))}
                </Tree>
                <ScrollBar><Chevron up /><Chevron /></ScrollBar>
              </SidePane>
              <SidePane>
                <Log>
                  {LOG.map((l, i) => <LogLine key={i}>{l.map((t) => <span key={t}>{t}</span>)}</LogLine>)}
                </Log>
                <ScrollBar $slim><Thumb /></ScrollBar>
              </SidePane>
            </Side>
            <Desktop>
              <GraphWindow name="Waveform" x={8} y={4} h={126} unit="S" value="0.09" lit={1}><WavePlot /></GraphWindow>
              <GraphWindow name="RTA" x={274} y={4} h={127} unit="Hz" value="-22.04"><BandPlot /></GraphWindow>
              <GraphWindow name="FFT" x={8} y={131} h={126} unit="Hz" value="-22.69"><SpectrumPlot /></GraphWindow>
              <Generator />
              <Voltmeter />
              <AnalysisWindow />
            </Desktop>
          </Work>
        </Shell>
      </Page>
    </>
  );
}
